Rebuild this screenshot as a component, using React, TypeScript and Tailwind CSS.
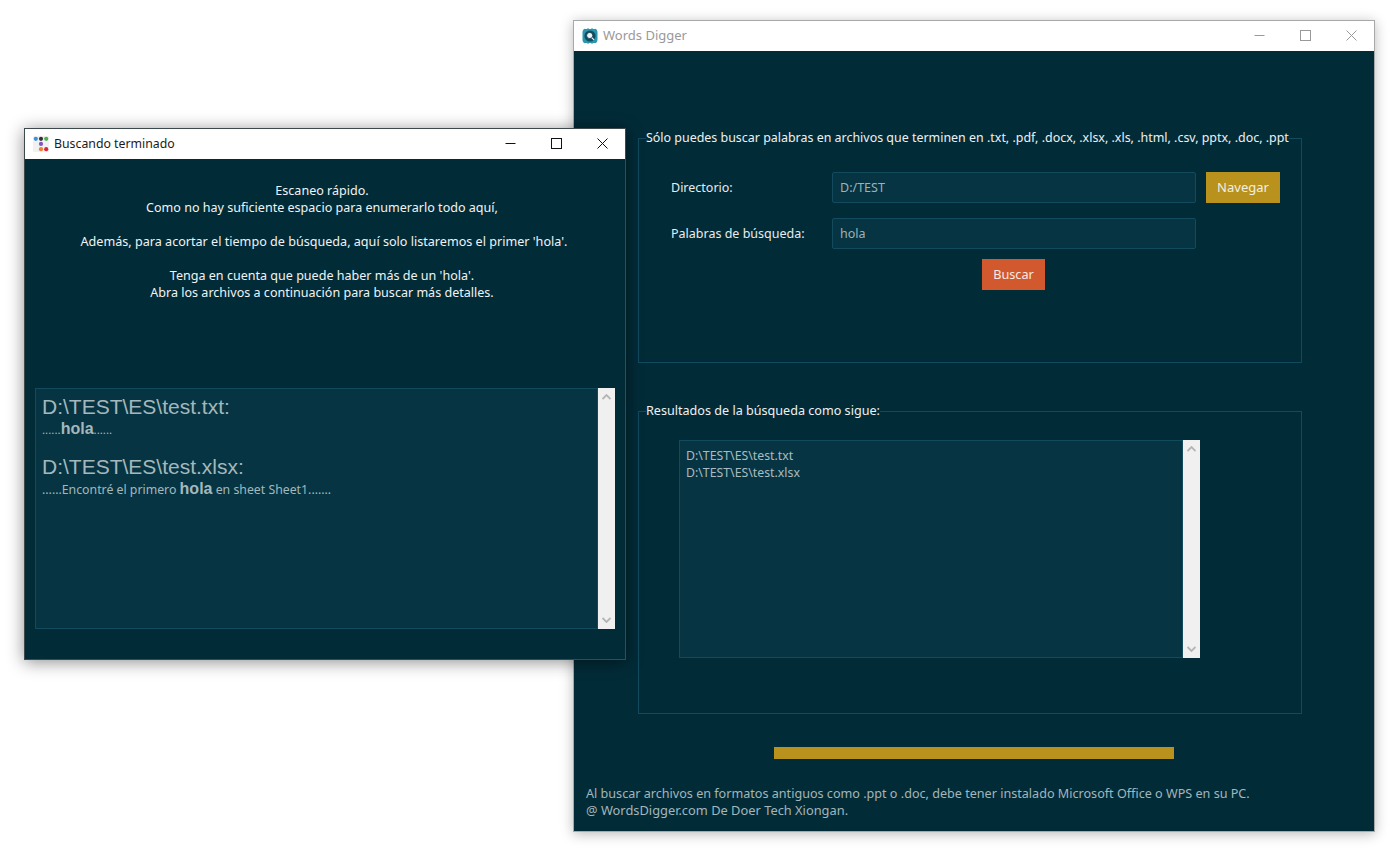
import React from "react";

const ui = "font-['Noto_Sans',sans-serif]";

function LogoDots() {
  return (
    <svg width="16" height="16" viewBox="0 0 16 16" className="shrink-0">
      <rect x="0" y="0" width="16" height="16" rx="1" fill="#f1f1f1" />
      <circle cx="2.8" cy="2.8" r="2.1" fill="#3f8fe0" />
      <circle cx="8" cy="2.8" r="2.1" fill="#333333" />
      <circle cx="13.2" cy="2.8" r="2.1" fill="#4caf50" />
      <circle cx="8" cy="7.9" r="2.1" fill="#7e57c2" />
      <circle cx="8" cy="13.2" r="2.1" fill="#f08030" />
      <circle cx="13.2" cy="13.2" r="2.1" fill="#e02040" />
    </svg>
  );
}

function LogoSearch() {
  return (
    <svg width="16" height="16" viewBox="0 0 16 16" className="shrink-0">
      <rect x="0.5" y="0.5" width="15" height="15" rx="4" fill="#2a96ad" />
      <path d="M3 0.5h2M7 0.5h2M11 0.5h2M3 15.5h2M7 15.5h2M11 15.5h2" stroke="#ffffff" strokeWidth="1" />
      <circle cx="8" cy="8" r="5.6" fill="#0d4f66" />
      <circle cx="7.7" cy="7.5" r="3.1" fill="#e8f4f6" stroke="#0b2f3c" strokeWidth="0.8" />
      <path d="M9.8 9.7 L12 11.9" stroke="#e8f4f6" strokeWidth="1.2" />
    </svg>
  );
}

function WinButtons({ color }: { color: string }) {
  return (
    <div className="flex items-center gap-[35px] -mt-[2px]">
      <svg width="11" height="11" viewBox="0 0 11 11">
        <path d="M0.5 5.5H10.5" stroke={color} strokeWidth="1" fill="none" />
      </svg>
      <svg width="11" height="11" viewBox="0 0 11 11">
        <rect x="0.5" y="0.5" width="10" height="10" stroke={color} strokeWidth="1" fill="none" />
      </svg>
      <svg width="11" height="11" viewBox="0 0 11 11">
        <path d="M0.5 0.5L10.5 10.5M10.5 0.5L0.5 10.5" stroke={color} strokeWidth="1" fill="none" />
      </svg>
    </div>
  );
}

function Scrollbar() {
  return (
    <div className="w-[17px] shrink-0 bg-[#f0f0f0] flex flex-col items-center justify-between py-[6px]">
      <svg width="9" height="6" viewBox="0 0 9 6">
        <path d="M0.5 5L4.5 1L8.5 5" stroke="#b5b5b5" strokeWidth="1.8" fill="none" />
      </svg>
      <svg width="9" height="6" viewBox="0 0 9 6">
        <path d="M0.5 1L4.5 5L8.5 1" stroke="#b5b5b5" strokeWidth="1.8" fill="none" />
      </svg>
    </div>
  );
}

function Field({ label, value }: { label: string; value: string }) {
  return (
    <div className="flex items-center h-[31px]">
      <div className="w-[161px] pt-[2px] text-[12.5px] text-[#e8ecec] whitespace-nowrap">{label}</div>
      <div className="w-[364px] h-[31px] bg-[#073442] border border-[#124b5e] rounded-[2px] flex items-center px-[7px] pt-[2px] text-[12.5px] text-[#9db2b6]">
        {value}
      </div>
    </div>
  );
}

export default function App() {
  return (
    <div className={`relative w-[1400px] h-[852px] bg-white overflow-hidden ${ui}`}>
      {/* Main window */}
      <div className="absolute left-[573px] top-[20px] w-[802px] h-[812px] border border-[#a8a8a8] flex flex-col shadow-[0_2px_12px_rgba(0,0,0,0.28)]">
        <div className="h-[30px] bg-white flex items-center shrink-0 pl-[8px] pr-[17px]">
          <LogoSearch />
          <span className="ml-[5px] text-[13px] text-[#999999]">Words Digger</span>
          <div className="ml-auto">
            <WinButtons color="#999999" />
          </div>
        </div>
        <div className="flex-1 bg-[#022b38] flex flex-col pl-[64px]">
          <fieldset className="mt-[78px] w-[664px] h-[234px] border border-[#124b5e]">
            <legend className="ml-[7px] text-[12.45px] text-[#eef1f1] leading-[18px] whitespace-nowrap">
              Sólo puedes buscar palabras en archivos que terminen en .txt, .pdf, .docx, .xlsx, .xls, .html, .csv, pptx, .doc, .ppt
            </legend>
            <div className="pl-[32px]">
              <div className="flex items-center mt-[25px]">
                <Field label="Directorio:" value="D:/TEST" />
                <button className="ml-[10px] w-[74px] h-[31px] bg-[#b8921c] text-[13px] text-[#f2efe2]">Navegar</button>
              </div>
              <div className="mt-[15px]">
                <Field label="Palabras de búsqueda:" value="hola" />
              </div>
              <button className="block ml-[311px] mt-[10px] w-[63px] h-[31px] bg-[#d2592e] text-[12.7px] text-[#f5e9e2]">Buscar</button>
            </div>
          </fieldset>
          <fieldset className="mt-[39px] w-[664px] h-[312px] border border-[#124b5e]">
            <legend className="ml-[7px] text-[12.6px] text-[#eef1f1] leading-[18px] whitespace-nowrap">
              Resultados de la búsqueda como sigue:
            </legend>
            <div className="flex mt-[20px] ml-[40px] w-[521px] h-[218px]">
              <div className="flex-1 bg-[#073442] border border-[#124b5e] px-[6px] py-[6px] text-[12.3px] leading-[17px] text-[#a9bcc0]">
                <div>D:\TEST\ES\test.txt</div>
                <div>D:\TEST\ES\test.xlsx</div>
              </div>
              <Scrollbar />
            </div>
          </fieldset>
          <div className="mt-[33px] ml-[136px] w-[400px] h-[12px] bg-[#b8921c]" />
          <div className="mt-[26px] -ml-[52px] leading-[17px] text-[#a3b6ba] whitespace-nowrap">
            <div className="text-[12.6px]">Al buscar archivos en formatos antiguos como .ppt o .doc, debe tener instalado Microsoft Office o WPS en su PC.</div>
            <div className="text-[12.85px]">@ WordsDigger.com De Doer Tech Xiongan.</div>
          </div>
        </div>
      </div>

      {/* Result window */}
      <div className="absolute left-[24px] top-[128px] w-[602px] h-[532px] border border-[#3c4a4e] flex flex-col shadow-[0_2px_16px_rgba(0,0,0,0.45)]">
        <div className="h-[30px] bg-white flex items-center shrink-0 pl-[8px] pr-[17px]">
          <LogoDots />
          <span className="ml-[5px] text-[12.3px] text-[#1a1a1a]">Buscando terminado</span>
          <div className="ml-auto">
            <WinButtons color="#111111" />
          </div>
        </div>
        <div className="flex-1 bg-[#022b38] flex flex-col">
          <div className="mt-[23px] pr-[6px] text-center text-[12.55px] leading-[17px] text-[#f0f3f3] h-[206px]">
            <div>Escaneo rápido.</div>
            <div>Como no hay suficiente espacio para enumerarlo todo aquí,</div>
            <div className="mt-[17px] ml-[4px] text-[12.6px]">Además, para acortar el tiempo de búsqueda, aquí solo listaremos el primer 'hola'.</div>
            <div className="mt-[17px]">Tenga en cuenta que puede haber más de un 'hola'.</div>
            <div>Abra los archivos a continuación para buscar más detalles.</div>
          </div>
          <div className="flex ml-[10px] w-[580px] h-[241px]">
            <div className="flex-1 bg-[#073442] border border-[#124b5e] px-[6px] pt-[6px] text-[#a3b8bc]">
              <div className="font-['Liberation_Sans',sans-serif] text-[21px] leading-[24px]">D:\TEST\ES\test.txt:</div>
              <div className="mt-[1px] text-[11.6px] leading-[18px]">
                ......<span className="font-['Liberation_Sans',sans-serif] font-bold text-[16px]">hola</span>......
              </div>
              <div className="font-['Liberation_Sans',sans-serif] text-[21px] leading-[24px] mt-[16px]">D:\TEST\ES\test.xlsx:</div>
              <div className="mt-[1px] text-[12.3px] leading-[18px]">
                ......Encontré el primero <span className="font-['Liberation_Sans',sans-serif] font-bold text-[16px]">hola</span> en sheet Sheet1.......
              </div>
            </div>
            <Scrollbar />
          </div>
        </div>
      </div>
    </div>
  );
}
